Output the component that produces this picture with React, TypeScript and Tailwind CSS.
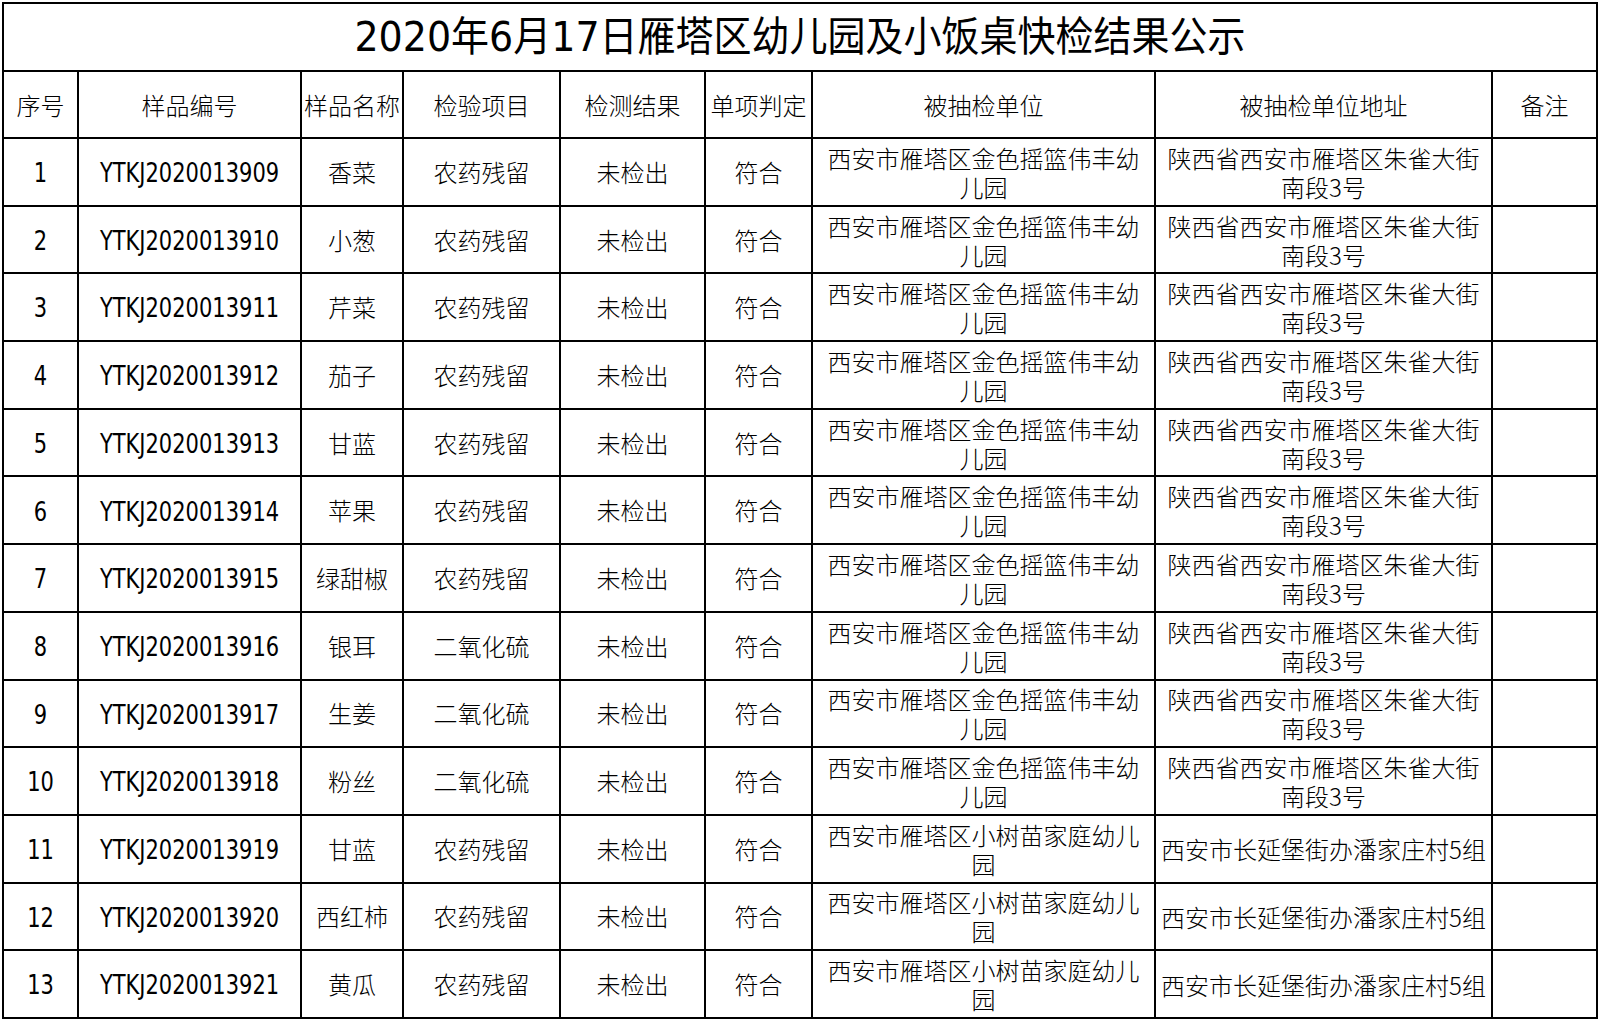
const rows = [
  ["1", "YTKJ2020013909", "香菜", "农药残留"],
  ["2", "YTKJ2020013910", "小葱", "农药残留"],
  ["3", "YTKJ2020013911", "芹菜", "农药残留"],
  ["4", "YTKJ2020013912", "茄子", "农药残留"],
  ["5", "YTKJ2020013913", "甘蓝", "农药残留"],
  ["6", "YTKJ2020013914", "苹果", "农药残留"],
  ["7", "YTKJ2020013915", "绿甜椒", "农药残留"],
  ["8", "YTKJ2020013916", "银耳", "二氧化硫"],
  ["9", "YTKJ2020013917", "生姜", "二氧化硫"],
  ["10", "YTKJ2020013918", "粉丝", "二氧化硫"],
  ["11", "YTKJ2020013919", "甘蓝", "农药残留"],
  ["12", "YTKJ2020013920", "西红柿", "农药残留"],
  ["13", "YTKJ2020013921", "黄瓜", "农药残留"],
];

const headers = ["序号", "样品编号", "样品名称", "检验项目", "检测结果", "单项判定", "被抽检单位", "被抽检单位地址", "备注"];

const cell = "border-r-2 border-b-2 border-black flex items-center justify-center text-center";
const latin = "font-['DejaVu_Sans','Noto_Sans_CJK_SC',sans-serif] text-[21px]";
const cjk = "font-['Noto_Sans_CJK_SC',sans-serif] text-[24px] font-light";

export default function App() {
  return (
    <div className="min-h-screen bg-white pt-[2px] pl-[2px] text-black">
      <div className="grid w-[1596px] grid-cols-[75px_223px_102px_157px_145px_107px_343px_337px_105px] border-l-2 border-t-2 border-black">
        <div className={`${cell} col-span-9 h-[68px] font-['DejaVu_Sans','Noto_Sans_CJK_SC',sans-serif] text-[38px]`}>
          <span className="inline-block scale-y-[1.08]">2020年6月17日雁塔区幼儿园及小饭桌快检结果公示</span>
        </div>

        {headers.map((h) => (
          <div key={h} className={`${cell} ${cjk} h-[67px] whitespace-nowrap`}>
            {h}
          </div>
        ))}

        {rows.map(([no, code, name, item], i) => {
          const small = i >= 10;
          return (
            <div key={no} className="contents">
              <div className={`${cell} ${latin} h-[67.7px]`}>
                <span className="inline-block translate-y-[2px] scale-y-[1.25]">{no}</span>
              </div>
              <div className={`${cell} ${latin}`}>
                <span className="inline-block translate-y-[2px] scale-y-[1.25]">{code}</span>
              </div>
              <div className={`${cell} ${cjk}`}>{name}</div>
              <div className={`${cell} ${cjk}`}>{item}</div>
              <div className={`${cell} ${cjk}`}>未检出</div>
              <div className={`${cell} ${cjk}`}>符合</div>
              <div className={`${cell} ${cjk} leading-[29px]`}>
                {small ? (
                  <span>西安市雁塔区小树苗家庭幼儿<br />园</span>
                ) : (
                  <span>西安市雁塔区金色摇篮伟丰幼<br />儿园</span>
                )}
              </div>
              <div className={`${cell} ${cjk} leading-[29px] whitespace-nowrap`}>
                {small ? (
                  <span>西安市长延堡街办潘家庄村5组</span>
                ) : (
                  <span>陕西省西安市雁塔区朱雀大街<br />南段3号</span>
                )}
              </div>
              <div className={cell}></div>
            </div>
          );
        })}
      </div>
    </div>
  );
}
